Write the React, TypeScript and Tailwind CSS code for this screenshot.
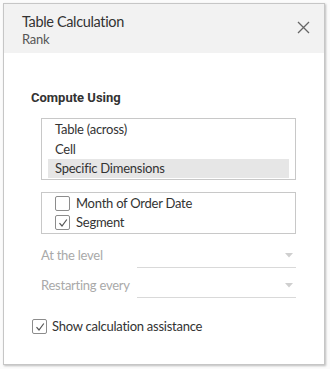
import React from "react";

const Check = () => (
  <svg width="10" height="10" viewBox="0 0 10 10" fill="none">
    <path d="M1.5 5.2 L4 8 L8.8 1.5" stroke="#555" strokeWidth="1.2" fill="none" />
  </svg>
);

const Box = ({ checked }: { checked?: boolean }) => (
  <div className="w-[15px] h-[15px] border border-[#8c8c8c] rounded-[2px] bg-white flex items-center justify-center shrink-0">
    {checked ? <Check /> : null}
  </div>
);

const Caret = () => (
  <svg width="8" height="5" viewBox="0 0 8 5">
    <path d="M0 0 L8 0 L4 4.5 Z" fill="#cfcfcf" />
  </svg>
);

export default function App() {
  return (
    <div
      className="w-[330px] h-[369px] bg-[#fbfbfb] pt-[3px] pl-[3px] tracking-[-0.25px]"
      style={{ fontFamily: "Lato, Roboto, 'Liberation Sans', sans-serif" }}
    >
      <div className="w-[322px] h-[362px] bg-white border border-[#c6c6c6] shadow-[1px_1px_2px_rgba(0,0,0,0.25)] flex flex-col">
        <div className="h-[49px] bg-[#f2f2f2] flex justify-between pl-[18px] pr-[14px] pt-[9px]">
          <div className="flex flex-col">
            <div className="text-[14.5px] leading-[18px] text-[#333] tracking-[-0.35px]">Table Calculation</div>
            <div className="text-[13px] leading-[16px] text-[#555] mt-[0px]">Rank</div>
          </div>
          <svg className="mt-[8px]" width="13" height="13" viewBox="0 0 13 13">
            <path d="M1 1 L12 12 M12 1 L1 12" stroke="#666" strokeWidth="1.3" />
          </svg>
        </div>
        <div className="flex flex-col pl-[27px] pr-[28px]">
          <div
            className="mt-[37px] text-[13px] leading-[16px] font-bold text-[#333] tracking-normal"
            style={{ fontFamily: "Roboto, 'Liberation Sans', sans-serif" }}
          >
            Compute Using
          </div>
          <div className="mt-[12px] ml-[10px] border border-[#c8c8c8] h-[62px] pt-[1px] px-[6px] flex flex-col text-[13px] text-[#333]">
            <div className="h-[19px] leading-[19px] pl-[7px]">Table (across)</div>
            <div className="h-[20px] leading-[20px] pl-[7px]">Cell</div>
            <div className="h-[19px] leading-[19px] pl-[7px] bg-[#e6e6e6]">Specific Dimensions</div>
          </div>
          <div className="mt-[12px] ml-[10px] border border-[#c8c8c8] h-[42px] pl-[13px] pt-[3px] flex flex-col gap-[4px] text-[13px] text-[#333]">
            <div className="flex items-center gap-[6px] h-[15px]">
              <Box />
              <span>Month of Order Date</span>
            </div>
            <div className="flex items-center gap-[6px] h-[15px]">
              <Box checked />
              <span>Segment</span>
            </div>
          </div>
          <div className="mt-[12px] ml-[10px] flex items-start text-[13px] text-[#a9a9a9] h-[22px]">
            <span className="w-[96px] leading-[18px]">At the level</span>
            <div className="flex-1 h-[22px] border-b border-[#d9d9d9] flex justify-end items-start pt-[7px] pr-[3px]">
              <Caret />
            </div>
          </div>
          <div className="mt-[8px] ml-[10px] flex items-start text-[13px] text-[#a9a9a9] h-[22px]">
            <span className="w-[96px] leading-[18px]">Restarting every</span>
            <div className="flex-1 h-[22px] border-b border-[#d9d9d9] flex justify-end items-start pt-[7px] pr-[3px]">
              <Caret />
            </div>
          </div>
          <div className="mt-[19px] ml-[1px] flex items-center gap-[5px] text-[13px] text-[#333]">
            <Box checked />
            <span>Show calculation assistance</span>
          </div>
        </div>
      </div>
    </div>
  );
}
